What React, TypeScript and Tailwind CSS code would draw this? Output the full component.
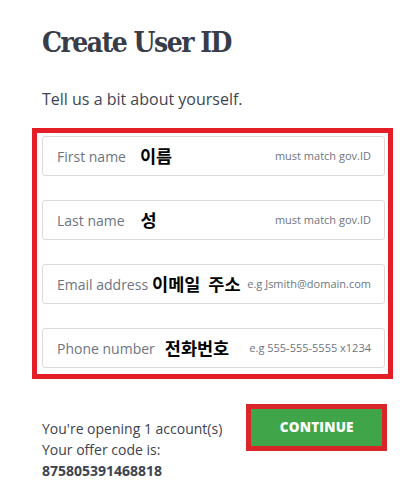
import React from "react";

const fields = [
  { label: "First name", ko: "이름", hint: "must match gov.ID", koMl: "ml-[14px]" },
  { label: "Last name", ko: "성", hint: "must match gov.ID", koMl: "ml-[16px]" },
  { label: "Email address", ko: "이메일 주소", hint: "e.g Jsmith@domain.com", koMl: "ml-[4px]" },
  { label: "Phone number", ko: "전화번호", hint: "e.g 555-555-5555 x1234", koMl: "ml-[10px]" },
];

export default function App() {
  return (
    <div className="w-[420px] h-[497px] bg-white font-['Open_Sans',sans-serif] text-[#3d4350]">
      <div className="pt-[24px] pl-[42px]">
        <h1 className="font-['DejaVu_Serif',serif] font-bold font-stretch-condensed text-[28px] leading-[38px] text-[#373c48] tracking-[-1.5px]">
          Create User ID
        </h1>
        <p className="mt-[26px] text-[16px] leading-[22px] text-[#404552]">Tell us a bit about yourself.</p>
      </div>
      <div className="ml-[32px] mt-[18px] w-[361px] border-[5px] border-[#e41e26] pl-[5px] pr-[3px] pt-[3px] pb-[6px] flex flex-col gap-[24px]">
        {fields.map((f) => (
          <div
            key={f.label}
            className="h-[40px] border border-[#dcdcdc] rounded-[3px] flex items-center pl-[14px] pr-[13px]"
          >
            <span className="text-[14px] text-[#6e7580]">{f.label}</span>
            <span
              className={`${f.koMl} font-['Noto_Sans_CJK_KR',sans-serif] font-bold text-[17.5px] leading-[24px] text-black [word-spacing:4px]`}
            >
              {f.ko}
            </span>
            <span className="ml-auto text-[11px] text-[#6e7580]">{f.hint}</span>
          </div>
        ))}
      </div>
      <div className="flex pl-[42px] mt-[25px]">
        <div className="pt-[14px] text-[14px] leading-[21px] text-[#3d4350]">
          <div>You're opening 1 account(s)</div>
          <div>Your offer code is:</div>
          <div className="font-bold">875805391468818</div>
        </div>
        <div className="ml-[24px] border-[5px] border-[#d8262b] w-[141px] h-[47px]">
          <div className="w-full h-full bg-[#40a548] flex items-center justify-center text-white font-extrabold text-[13.5px] tracking-[0.2px]">
            CONTINUE
          </div>
        </div>
      </div>
    </div>
  );
}
